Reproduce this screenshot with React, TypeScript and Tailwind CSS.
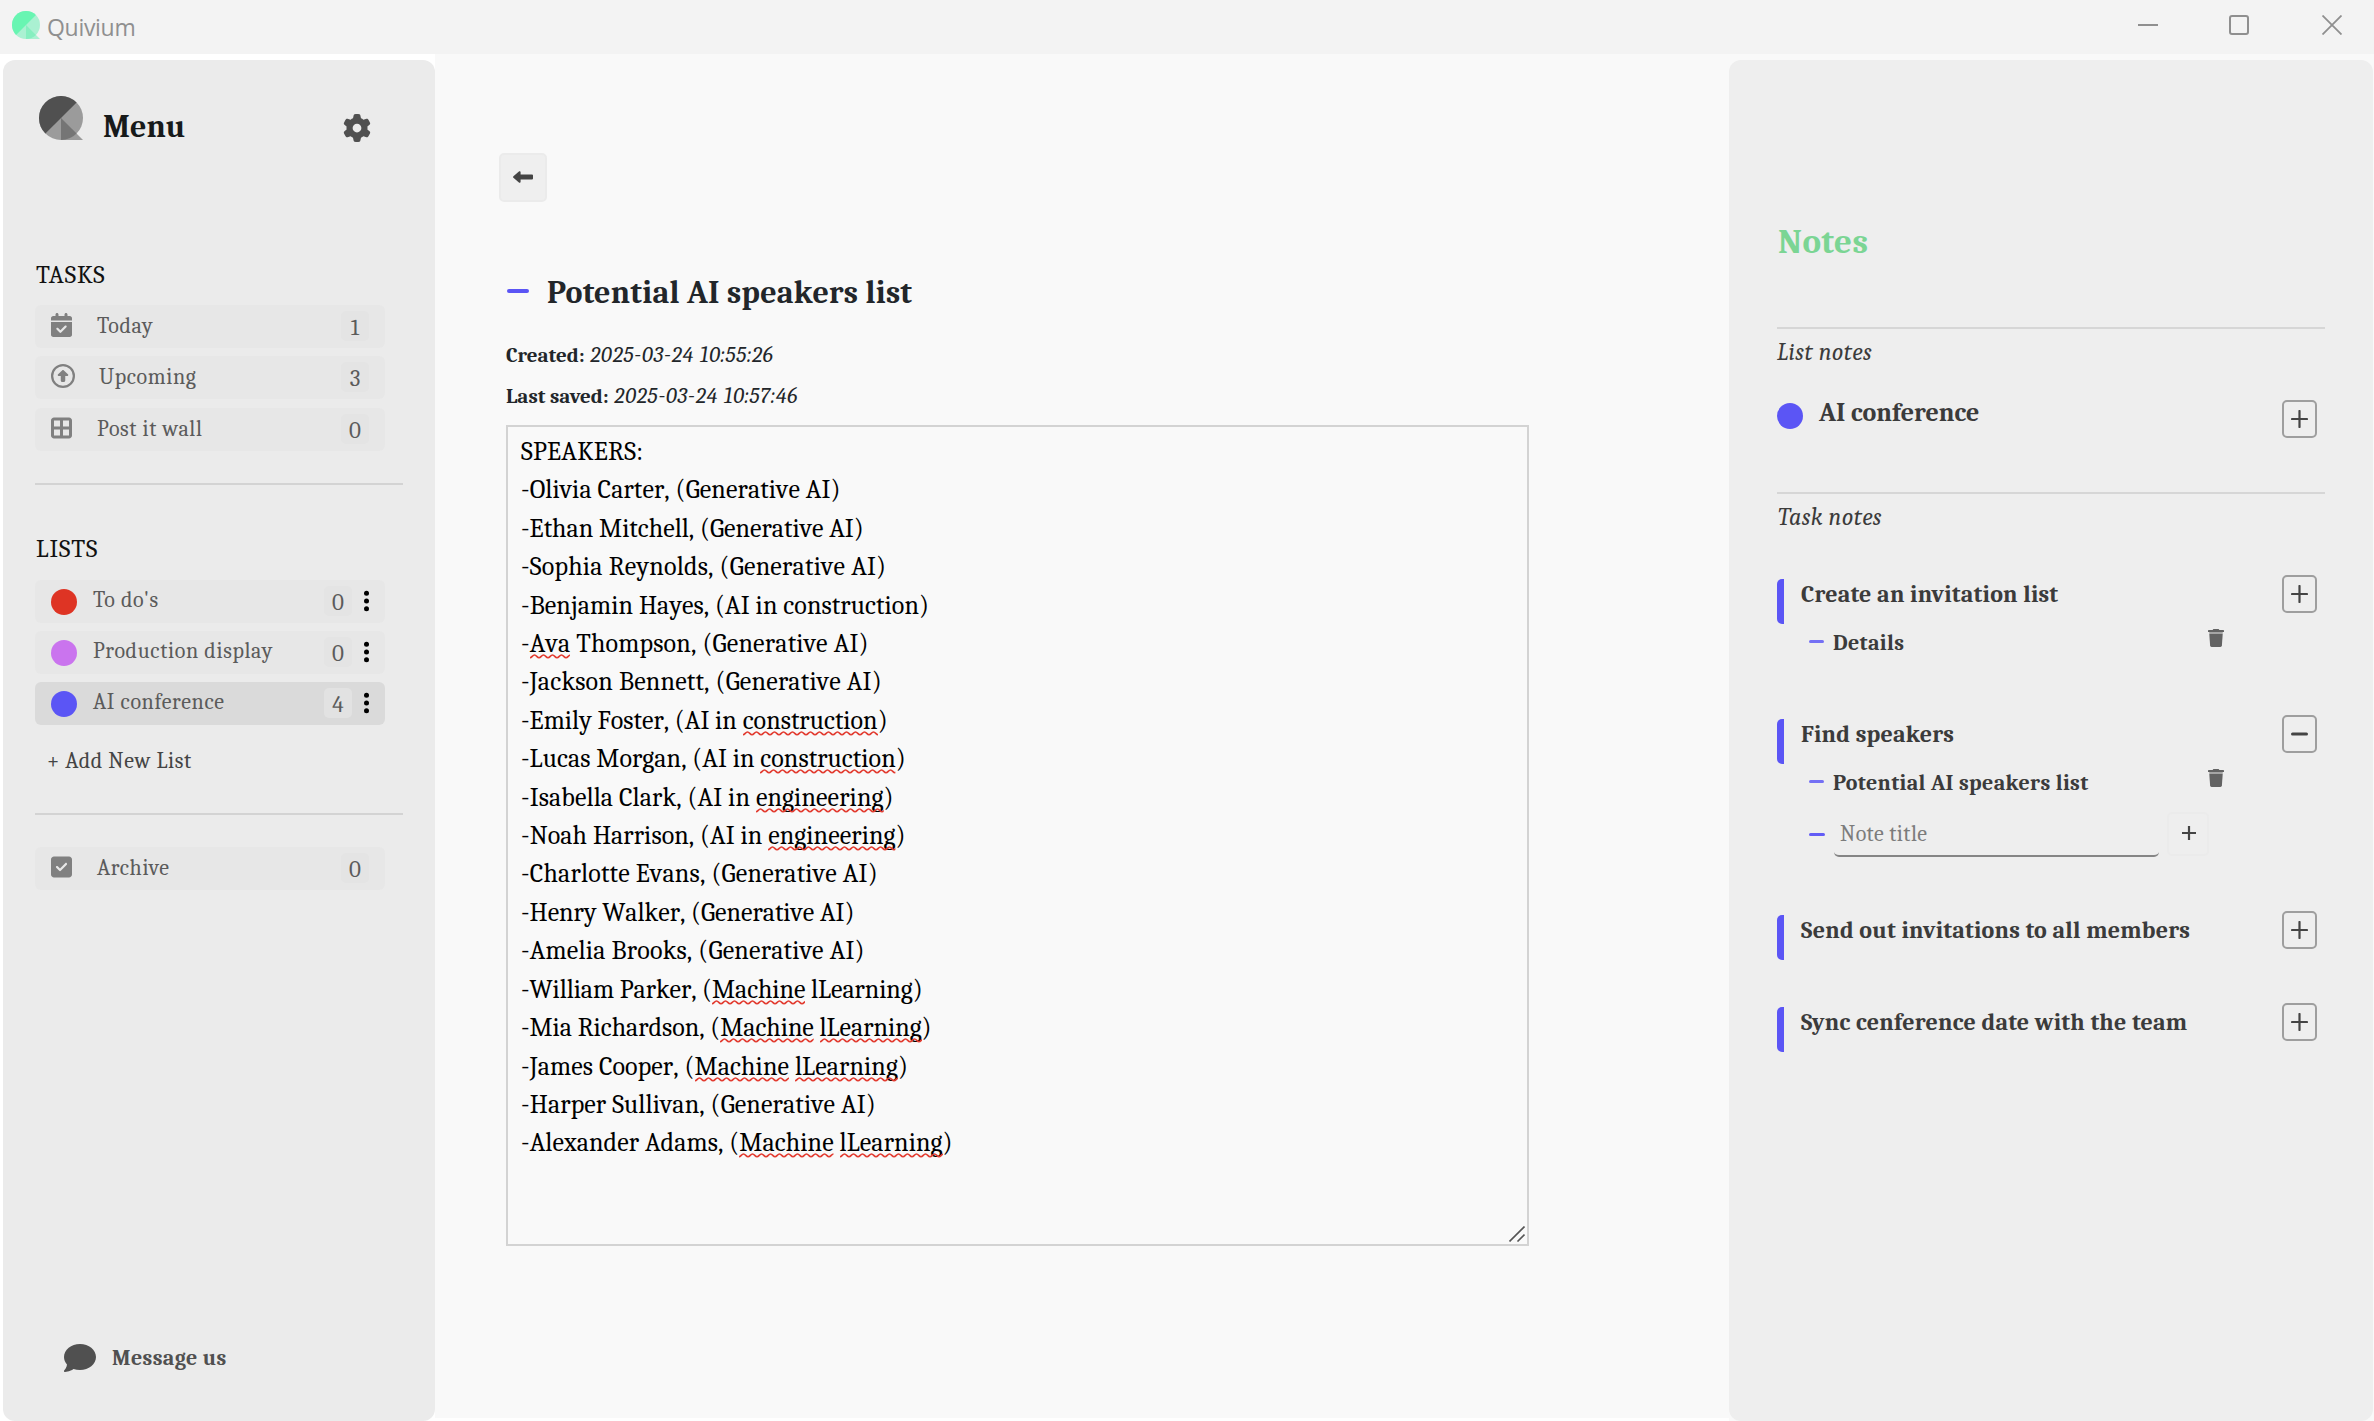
import type { ReactNode } from "react";
import {
  FaBorderAll,
  FaCalendarCheck,
  FaComment,
  FaGear,
  FaRegCircleUp,
  FaSquareCheck,
} from "react-icons/fa6";

function Logo({ size, main, light, mid }: { size: number; main: string; light: string; mid: string }) {
  return (
    <svg width={size} height={size} viewBox="0 0 44 44" className="shrink-0">
      <path d="M22 22 L44 44 H22 Z" fill={light} />
      <circle cx="22" cy="22" r="22" fill={light} />
      <path d="M22 22 V44 A22 22 0 0 0 37.56 37.56 Z" fill={mid} />
      <path d="M6.44 37.56 A22 22 0 0 1 37.56 6.44 Z" fill={main} />
    </svg>
  );
}

function TitleBar() {
  return (
    <header className="flex h-[54px] shrink-0 items-start bg-[#f3f3f3]">
      <div className="mt-[11px] ml-3">
        <Logo size={28} main="#68f5b2" light="#aaf1d2" mid="#86efc0" />
      </div>
      <span className="ml-[7px] font-['Open_Sans','Noto_Sans',sans-serif] text-[23px] leading-[54px] tracking-[-0.3px] text-[#8f8f8f]">
        Quivium
      </span>
      <div className="mt-[15px] mr-8 ml-auto flex text-[#8f8f8f]">
        <svg width="20" height="20" stroke="currentColor" strokeWidth="2">
          <path d="M0 10H20" />
        </svg>
        <svg width="20" height="20" fill="none" stroke="currentColor" strokeWidth="2" className="ml-[71px]">
          <rect x="1" y="1" width="18" height="18" rx="2" />
        </svg>
        <svg width="20" height="20" stroke="currentColor" strokeWidth="1.8" className="ml-[73px]">
          <path d="M0.5 0.5L19.5 19.5M19.5 0.5L0.5 19.5" />
        </svg>
      </div>
    </header>
  );
}

function Badge({ count, active = false }: { count: number; active?: boolean }) {
  return (
    <span
      className={`mt-1.5 h-[30px] w-7 shrink-0 rounded-[5px] text-center text-[23px] leading-[34px] ${
        active ? "bg-[#e2e2e2]" : "bg-[#e4e4e4]"
      }`}
    >
      {count}
    </span>
  );
}

function NavRow({ icon, gap, label, count }: { icon: ReactNode; gap: string; label: string; count: number }) {
  return (
    <div className="flex h-[43px] w-[350px] items-start rounded-md bg-[#e7e7e7] px-4 text-[#5b5b5b]">
      <span className="mt-[8px] text-[#808080]">{icon}</span>
      <span className={`${gap} flex-1 text-[22px] leading-[42px] tracking-[0.6px]`}>{label}</span>
      <Badge count={count} />
    </div>
  );
}

function ListRow({ color, label, count, active = false }: { color: string; label: string; count: number; active?: boolean }) {
  return (
    <div
      className={`flex h-[43px] w-[350px] items-start rounded-md px-4 text-[#5b5b5b] ${
        active ? "bg-[#dadada]" : "bg-[#e7e7e7]"
      }`}
    >
      <span className={`mt-[9px] size-[26px] rounded-full ${color}`} />
      <span className="ml-4 flex-1 text-[22px] leading-[40px] tracking-[0.64px]">{label}</span>
      <Badge count={count} active={active} />
      <svg width="5" height="22" className="mt-[10px] ml-3 fill-black">
        <circle cx="2.5" cy="3.3" r="2.5" />
        <circle cx="2.5" cy="11" r="2.5" />
        <circle cx="2.5" cy="18.7" r="2.5" />
      </svg>
    </div>
  );
}

function Sidebar() {
  return (
    <aside className="mt-1.5 ml-[3px] flex w-[432px] shrink-0 flex-col rounded-xl bg-[#ebebeb] pl-8">
      <div className="flex h-[110px] items-start">
        <div className="mt-9 ml-1">
          <Logo size={44} main="#505050" light="#9b9b9b" mid="#757575" />
        </div>
        <h1 className="ml-5 w-[240px] text-[32px] leading-[134px] font-bold text-[#171a1a]">Menu</h1>
        <FaGear size={28} className="mt-[54px] text-[#505050]" />
      </div>
      <h2 className="mt-[86px] ml-px text-[25px] leading-[38px] tracking-[0.9px] text-[#111]">TASKS</h2>
      <nav className="mt-[11px] flex flex-col gap-[8.4px]">
        <NavRow icon={<FaCalendarCheck className="h-6 w-[21px]" />} gap="ml-[25px]" label="Today" count={1} />
        <NavRow icon={<FaRegCircleUp className="size-6" />} gap="ml-6" label="Upcoming" count={3} />
        <NavRow icon={<FaBorderAll className="h-6 w-[21px]" />} gap="ml-[25px]" label="Post it wall" count={0} />
      </nav>
      <div className="mt-8 h-0.5 w-[368px] bg-[#d3d3d3]" />
      <h2 className="mt-[45px] ml-px text-[25px] leading-[38px] tracking-[1px] text-[#111]">LISTS</h2>
      <nav className="mt-[12px] flex flex-col gap-2">
        <ListRow color="bg-[#de3424]" label="To do's" count={0} />
        <ListRow color="bg-[#ca74ee]" label="Production display" count={0} />
        <ListRow color="bg-[#5b55f5]" label="AI conference" count={4} active />
      </nav>
      <div className="mt-[17px] ml-3 text-[22px] leading-[38px] tracking-[0.6px] text-[#444]">+ Add New List</div>
      <div className="mt-[33px] mb-8 h-0.5 w-[368px] bg-[#d3d3d3]" />
      <NavRow icon={<FaSquareCheck className="h-6 w-[21px]" />} gap="ml-[25px]" label="Archive" count={0} />
      <div className="mt-auto mb-[45px] ml-[29px] flex items-center">
        <FaComment size={32} className="text-[#505050]" />
        <span className="ml-4 text-[22px] leading-[36px] font-bold tracking-[0.35px] text-[#505050]">Message us</span>
      </div>
    </aside>
  );
}

const lines: { text: string; spacing: string; flagged?: string[] }[] = [
  { text: "SPEAKERS:", spacing: "tracking-[0.22px]" },
  { text: "-Olivia Carter, (Generative AI)", spacing: "tracking-[0.1px]" },
  { text: "-Ethan Mitchell, (Generative AI)", spacing: "tracking-[0.02px]" },
  { text: "-Sophia Reynolds, (Generative AI)", spacing: "tracking-[0.22px]" },
  { text: "-Benjamin Hayes, (AI in construction)", spacing: "tracking-[0.09px]" },
  { text: "-Ava Thompson, (Generative AI)", spacing: "tracking-[0.19px]", flagged: ["Ava"] },
  { text: "-Jackson Bennett, (Generative AI)", spacing: "tracking-[0.19px]" },
  { text: "-Emily Foster, (AI in construction)", spacing: "tracking-[0.03px]", flagged: ["construction"] },
  { text: "-Lucas Morgan, (AI in construction)", spacing: "tracking-[0.06px]", flagged: ["construction"] },
  { text: "-Isabella Clark, (AI in engineering)", spacing: "tracking-[0.11px]", flagged: ["engineering"] },
  { text: "-Noah Harrison, (AI in engineering)", spacing: "tracking-[0.08px]", flagged: ["engineering"] },
  { text: "-Charlotte Evans, (Generative AI)", spacing: "tracking-[0.2px]" },
  { text: "-Henry Walker, (Generative AI)", spacing: "tracking-normal" },
  { text: "-Amelia Brooks, (Generative AI)", spacing: "tracking-[0.2px]" },
  { text: "-William Parker, (Machine lLearning)", spacing: "tracking-[-0.06px]", flagged: ["Machine"] },
  { text: "-Mia Richardson, (Machine lLearning)", spacing: "tracking-[-0.02px]", flagged: ["Machine", "lLearning"] },
  { text: "-James Cooper, (Machine lLearning)", spacing: "tracking-[0.1px]", flagged: ["Machine", "lLearning"] },
  { text: "-Harper Sullivan, (Generative AI)", spacing: "tracking-[0.12px]" },
  { text: "-Alexander Adams, (Machine lLearning)", spacing: "tracking-[0.09px]", flagged: ["Machine", "lLearning"] },
];

function Misspelled({ children }: { children: ReactNode }) {
  return (
    <span className="relative">
      {children}
      <svg className="absolute bottom-0 left-0 h-[5px] w-full">
        <rect width="100%" height="5" fill="url(#squiggle)" />
      </svg>
    </span>
  );
}

function Line({ text, spacing, flagged = [] }: { text: string; spacing: string; flagged?: string[] }) {
  const parts = flagged.length ? text.split(new RegExp(`(${flagged.join("|")})`)) : [text];
  return (
    <div className={spacing}>
      {parts.map((part, i) => (flagged.includes(part) ? <Misspelled key={i}>{part}</Misspelled> : part))}
    </div>
  );
}

function Editor() {
  return (
    <main className="mb-[3px] flex-1 bg-[#f9f9f9] pl-[71px] text-[#22262a]">
      <button className="mt-[99px] -ml-[7px] flex h-[49px] w-12 items-center justify-center rounded-[5px] border-2 border-[#ebebeb] bg-[#efefef]">
        <svg width="20" height="12" viewBox="0 0 20 12" className="mb-0.5 fill-[#444]">
          <path d="M0.4 5.2 L6.2 0.3 Q7.6 -0.2 7.6 1.2 V3.4 H19 Q20 3.4 20 4.4 V7.6 Q20 8.6 19 8.6 H7.6 V10.8 Q7.6 12.2 6.2 11.7 L0.4 6.8 Q-0.3 6 0.4 5.2 Z" />
        </svg>
      </button>
      <div className="mt-[69px] flex h-11 items-center">
        <span className="mb-[5px] ml-px h-1 w-[22px] rounded-full bg-[#5b55f5]" />
        <h1 className="ml-[18px] text-[32px] leading-[44px] font-bold tracking-[0.25px]">Potential AI speakers list</h1>
      </div>
      <p className="mt-5 h-[41px] text-[21px] leading-[41px]">
        <b>Created:</b> <i className="ml-px text-[22px] tracking-[0.8px]">2025-03-24 10:55:26</i>
      </p>
      <p className="h-[41px] text-[21px] leading-[41px]">
        <b>Last saved:</b> <i className="ml-px text-[22px] tracking-[0.8px]">2025-03-24 10:57:46</i>
      </p>
      <div className="relative mt-[8px] h-[821px] w-[1023px] border-2 border-[#d3d3d3] px-[13px] pt-1.5 text-[26px] leading-[38.4px] text-black [font-kerning:none]">
        <svg className="absolute size-0">
          <defs>
            <pattern id="squiggle" width="9" height="5" patternUnits="userSpaceOnUse">
              <path
                d="M-4.5 1 C-2.5 1 -2 3.8 0 3.8 C2 3.8 2.5 1 4.5 1 S7 3.8 9 3.8 S11.5 1 13.5 1"
                fill="none"
                stroke="#e23b30"
                strokeWidth="1.6"
              />
            </pattern>
          </defs>
        </svg>
        {lines.map((line) => (
          <Line key={line.text} {...line} />
        ))}
        <svg width="16" height="16" className="absolute right-[2px] bottom-[2px] stroke-[#555]" strokeWidth="1.6">
          <path d="M0.5 15.5L15.5 0.5M8.5 15.5L15.5 8.5" />
        </svg>
      </div>
    </main>
  );
}

function ToggleButton({ open = false }: { open?: boolean }) {
  return (
    <button className="mr-2 ml-auto flex h-[38px] w-[35px] shrink-0 items-center justify-center rounded-[5px] border-2 border-[#9e9e9e] text-[#444]">
      <svg width="17" height="18" stroke="currentColor" strokeWidth={open ? 3 : 2.2} strokeLinecap="round">
        <path d={open ? "M1.5 9H15.5" : "M1 9H16M8.5 1V17"} />
      </svg>
    </button>
  );
}

function Trash() {
  return (
    <svg width="16" height="18" viewBox="0 0 16 18" className="mt-0.5 mr-[101px] ml-auto shrink-0">
      <path d="M0 1.6 Q0 1 0.8 1 H4.6 L5.4 0 H10.6 L11.4 1 H15.2 Q16 1 16 1.6 V3 H0 Z" fill="#636363" />
      <path d="M1.2 3 H14.8 L14.7 5 H1.3 Z" fill="#a5a5a5" />
      <path d="M1.3 5 H14.7 L13.9 16.6 Q13.8 18 12.4 18 H3.6 Q2.2 18 2.1 16.6 Z" fill="#636363" />
    </svg>
  );
}

function Task({ title, open }: { title: string; open?: boolean }) {
  return (
    <div className="flex h-[49px] items-start">
      <span className="mt-1 h-[45px] w-[7px] rounded-l-[5px] bg-[#5b55f5]" />
      <span className="ml-[17px] text-[24px] leading-[38px] font-bold tracking-[0.2px]">{title}</span>
      <ToggleButton open={open} />
    </div>
  );
}

function NoteRow({ title }: { title: string }) {
  return (
    <div className="mt-[3px] flex h-[30px] items-start">
      <span className="mt-[13px] ml-8 h-[3px] w-[15px] rounded-full bg-[#7470f4]" />
      <span className="ml-[9px] text-[22px] leading-[32px] font-bold tracking-[0.34px]">{title}</span>
      <Trash />
    </div>
  );
}

function NotesPanel() {
  return (
    <aside className="mt-1.5 mr-px flex flex-1 flex-col rounded-xl bg-[#eeeeee] px-12 text-[#3b3b3b]">
      <h2 className="mt-[158px] ml-px text-[35px] leading-[47px] font-bold tracking-[0.4px] text-[#7bd594]">Notes</h2>
      <div className="mt-[62px] h-0.5 bg-[#d6d6d6]" />
      <p className="mt-[7px] text-[24px] leading-[32px] tracking-[0.4px] italic">List notes</p>
      <div className="mt-8 flex h-[37px] items-start">
        <span className="mt-[3px] size-[26px] rounded-full bg-[#5b55f5]" />
        <span className="ml-4 text-[26px] leading-[26px] font-bold">AI conference</span>
        <ToggleButton />
      </div>
      <div className="mt-[55px] h-0.5 bg-[#d6d6d6]" />
      <p className="mt-[7px] ml-px mb-[42px] text-[24px] leading-[32px] tracking-[0.4px] italic">Task notes</p>
      <Task title="Create an invitation list" />
      <NoteRow title="Details" />
      <div className="h-[58px]" />
      <Task title="Find speakers" open />
      <NoteRow title="Potential AI speakers list" />
      <div className="mt-[15px] mb-[54px] flex h-[45px] items-start">
        <span className="mt-[21px] ml-8 h-[3px] w-4 rounded-full bg-[#625cf5]" />
        <span className="ml-[9px] h-[45px] w-[325px] rounded-[5px] border-b-2 border-[#858585] pl-1.5 text-[22px] leading-[45px] tracking-[0.4px] text-[#7c7c7c]">
          Note title
        </span>
        <button className="ml-2 flex h-11 w-[42px] items-center justify-center rounded-[5px] border-2 border-[#ebebeb] text-[#444]">
          <svg width="14" height="14" stroke="currentColor" strokeWidth="2.2" className="mb-0.5 ml-px">
            <path d="M0 7H14M7 0V14" />
          </svg>
        </button>
      </div>
      <Task title="Send out invitations to all members" />
      <div className="h-[43px]" />
      <Task title="Sync cenference date with the team" />
    </aside>
  );
}

export default function App() {
  return (
    <div className="flex h-[1421px] w-[2374px] flex-col overflow-hidden bg-white font-['Cambria','Caladea','Liberation_Serif',serif]">
      <TitleBar />
      <div className="flex min-h-0 flex-1">
        <Sidebar />
        <Editor />
        <div className="flex w-[645px] shrink-0 bg-[#f9f9f9]">
          <NotesPanel />
        </div>
      </div>
    </div>
  );
}
